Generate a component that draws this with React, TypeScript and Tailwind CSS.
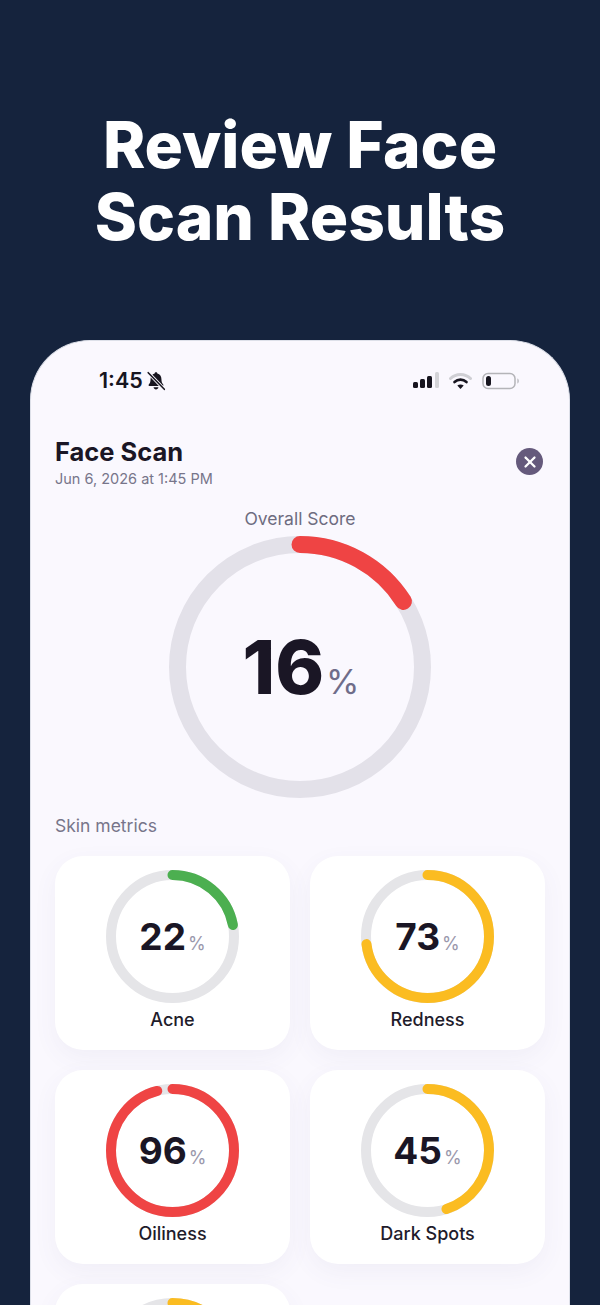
import { X } from "lucide-react";

const metrics = [
  { name: "Acne", value: 22, color: "#4caf50" },
  { name: "Redness", value: 73, color: "#fbbc21" },
  { name: "Oiliness", value: 96, color: "#ef4444" },
  { name: "Dark Spots", value: 45, color: "#fbbc21" },
];

function Ring({ size, stroke, value, color, track }: { size: number; stroke: number; value: number; color: string; track: string }) {
  const r = (size - stroke) / 2;
  return (
    <svg width={size} height={size} className="absolute inset-0 -rotate-90">
      <circle cx={size / 2} cy={size / 2} r={r} fill="none" stroke={track} strokeWidth={stroke} />
      <circle
        cx={size / 2}
        cy={size / 2}
        r={r}
        fill="none"
        stroke={color}
        strokeWidth={stroke}
        strokeLinecap="round"
        pathLength={100}
        strokeDasharray={`${value} 100`}
      />
    </svg>
  );
}

function MetricCard({ name, value, color }: { name: string; value: number; color: string }) {
  return (
    <div className="flex h-[194px] flex-col items-center rounded-[28px] bg-white pt-[14px] shadow-[0_8px_24px_rgba(90,90,130,0.06)]">
      <div className="relative flex h-[133px] w-[133px] items-center justify-center">
        <Ring size={133} stroke={10} value={value} color={color} track="#e5e5e8" />
        <div className="relative flex items-baseline">
          <span className="text-[37px] leading-none font-bold text-[#1a1625]">{value}</span>
          <span className="ml-[2px] text-[18px] leading-none text-[#9a98ac]">%</span>
        </div>
      </div>
      <div className="mt-[7px] text-[18px] leading-[20px] font-medium text-[#1f1c2b]">{name}</div>
    </div>
  );
}

export default function App() {
  return (
    <div className="flex h-[1305px] w-[600px] flex-col items-center overflow-hidden bg-[#15233d] font-['Inter',sans-serif]">
      <h1 className="mt-[109px] text-center text-[64px] leading-[72px] font-extrabold text-white">
        Review Face
        <br />
        Scan Results
      </h1>

      <div className="mt-[87px] w-[540px] flex-1 rounded-t-[60px] border border-b-0 border-[#dde0e9] bg-[#faf8fe] px-[24px]">
        {/* status bar */}
        <div className="flex h-[79px] items-center justify-between pr-[25px] pl-[44px]">
          <div className="flex items-center gap-[3px]">
            <span className="text-[21.5px] leading-none font-semibold text-[#17151f]">1:45</span>
            <svg width="20" height="20" viewBox="0 0 18 18" fill="#17151f">
              <path d="M9 1.2c.7 0 1.2.5 1.2 1.1 2.4.6 3.7 2.6 3.7 5.1 0 2.4.6 3.7 1.6 4.8.4.5.2 1.3-.5 1.3H3c-.7 0-.9-.8-.5-1.3 1-1.1 1.6-2.4 1.6-4.8 0-2.5 1.3-4.5 3.7-5.1 0-.6.5-1.1 1.2-1.1z" />
              <path d="M6.8 14.6h4.4c-.2 1.2-1.1 2-2.2 2s-2-.8-2.2-2z" />
              <path d="M2 1.5l14.5 15" stroke="#faf8fe" strokeWidth="3" />
              <path d="M2 1.5l14.5 15" stroke="#17151f" strokeWidth="1.4" strokeLinecap="round" />
            </svg>
          </div>
          <div className="flex items-center gap-[10px]">
            <svg width="27" height="17" viewBox="0 0 27 17" className="mr-[-1px]">
              <rect x="0" y="10" width="5" height="6" rx="1.5" fill="#17151f" />
              <rect x="7" y="7" width="5" height="9" rx="1.5" fill="#17151f" />
              <rect x="14" y="4" width="5" height="12" rx="1.5" fill="#17151f" />
              <rect x="22" y="0" width="4" height="16" rx="1.5" fill="#d4d4d8" />
            </svg>
            <svg width="23" height="18" viewBox="0 0 23 18" fill="none">
              <path d="M1.5 6.5C7 1 16 1 21.5 6.5" stroke="#cfcfd4" strokeWidth="3" strokeLinecap="round" />
              <path d="M5.5 10C9 6.8 14 6.8 17.5 10" stroke="#17151f" strokeWidth="2.6" strokeLinecap="round" />
              <path d="M11.5 17l-3.2-3.4c1.8-1.5 4.6-1.5 6.4 0z" fill="#17151f" />
            </svg>
            <svg width="38" height="18" viewBox="0 0 38 18" fill="none">
              <rect x="1" y="1.5" width="32" height="15" rx="5" stroke="#b4b4b8" strokeWidth="1.5" />
              <rect x="4" y="4" width="5" height="10" rx="2.5" fill="#17151f" />
              <path d="M35.5 6.5c1.5.5 1.5 4.5 0 5z" fill="#a4a4a8" />
            </svg>
          </div>
        </div>

        {/* header */}
        <div className="mt-[17px] flex items-start justify-between">
          <div>
            <div className="text-[25.5px] leading-[30px] font-bold text-[#1a1625]">Face Scan</div>
            <div className="mt-[3px] text-[14.5px] leading-[18px] text-[#77758a]">Jun 6, 2026 at 1:45 PM</div>
          </div>
          <div className="mt-[11px] mr-[2px] flex h-[27px] w-[27px] items-center justify-center rounded-full bg-[#655a7c]">
            <X size={18} strokeWidth={3} color="#ffffff" />
          </div>
        </div>

        {/* overall score */}
        <div className="mt-[19px] text-center text-[17.5px] leading-[24px] text-[#6e6c80]">Overall Score</div>
        <div className="relative mx-auto mt-[5px] flex h-[262px] w-[262px] items-center justify-center">
          <Ring size={262} stroke={17} value={16} color="#ef4444" track="#e3e1e9" />
          <div className="relative flex items-baseline pl-[2px]">
            <span className="text-[74px] leading-none font-extrabold text-[#1a1625]">16</span>
            <span className="ml-[2px] text-[34px] leading-none text-[#6f6d8a]">%</span>
          </div>
        </div>

        {/* metrics */}
        <div className="mt-[16px] text-[17.5px] leading-[24px] text-[#77758a]">Skin metrics</div>
        <div className="mt-[18px] grid grid-cols-2 gap-x-[20px] gap-y-[20px]">
          {metrics.map((m) => (
            <MetricCard key={m.name} name={m.name} value={m.value} color={m.color} />
          ))}
          {/* fifth card runs off the bottom of the picture, only its ring top shows */}
          <div className="flex h-[194px] flex-col items-center rounded-[28px] bg-white pt-[14px] shadow-[0_8px_24px_rgba(90,90,130,0.06)]">
            <div className="relative h-[133px] w-[133px]">
              <Ring size={133} stroke={10} value={30} color="#fbbc21" track="#e5e5e8" />
            </div>
          </div>
        </div>
      </div>
    </div>
  );
}
